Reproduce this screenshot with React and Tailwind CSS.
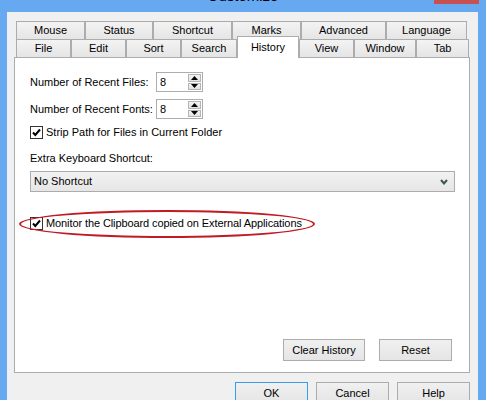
import React from "react";

const row1 = [
  { label: "Mouse", w: "w-[69px]" },
  { label: "Status", w: "w-[68px]" },
  { label: "Shortcut", w: "w-[79px]" },
  { label: "Marks", w: "w-[69px]" },
  { label: "Advanced", w: "w-[85px]" },
  { label: "Language", w: "w-[81px]" },
];

const row2 = [
  { label: "File", w: "w-[55px]" },
  { label: "Edit", w: "w-[55px]" },
  { label: "Sort", w: "w-[55px]" },
  { label: "Search", w: "w-[56px]" },
  { label: "History", w: "w-[62px]", active: true },
  { label: "View", w: "w-[55px]" },
  { label: "Window", w: "w-[62px]" },
  { label: "Tab", w: "w-[53px]" },
];

function Tab({ label, w, active }) {
  if (active) {
    return (
      <div
        className={`${w} h-[22px] -mt-[3px] -mb-[1px] relative z-10 bg-white border border-b-0 border-[#acacac] flex items-center justify-center`}
      >
        {label}
      </div>
    );
  }
  return (
    <div
      className={`${w} h-[18px] bg-linear-to-b from-[#f3f3f3] to-[#e5e5e5] border border-b-0 border-[#acacac] flex items-center justify-center`}
    >
      {label}
    </div>
  );
}

function Checkbox() {
  return (
    <div className="w-[13px] h-[13px] border border-[#333] bg-white flex items-center justify-center">
      <svg width="9" height="9" viewBox="0 0 9 9">
        <path d="M1 4.5 L3.3 7 L8 1.5" fill="none" stroke="#000" strokeWidth="2" />
      </svg>
    </div>
  );
}

function Spinner({ value }) {
  return (
    <div className="w-[47px] h-[20px] border border-[#abadb3] bg-white flex">
      <div className="flex-1 pl-[3px] flex items-center">{value}</div>
      <div className="w-[15px] flex flex-col p-[1px] gap-[1px]">
        <div className="flex-1 bg-linear-to-b from-[#f2f2f2] to-[#e3e3e3] border border-[#b5b5b5] flex items-center justify-center">
          <svg width="7" height="4" viewBox="0 0 7 4">
            <path d="M0 4 L3.5 0 L7 4 Z" fill="#000" />
          </svg>
        </div>
        <div className="flex-1 bg-linear-to-b from-[#f2f2f2] to-[#e3e3e3] border border-[#b5b5b5] flex items-center justify-center">
          <svg width="7" height="4" viewBox="0 0 7 4">
            <path d="M0 0 L7 0 L3.5 4 Z" fill="#000" />
          </svg>
        </div>
      </div>
    </div>
  );
}

function Button({ children, w, focus }) {
  return (
    <div
      className={`${w} h-[22px] flex items-center justify-center border bg-linear-to-b from-[#f0f0f0] to-[#e5e5e5] ${
        focus ? "border-[#3c9be8]" : "border-[#acacac]"
      }`}
    >
      {children}
    </div>
  );
}

export default function App() {
  return (
    <div
      className="w-[486px] h-[400px] bg-[#66a9f1] overflow-hidden relative text-[11px] text-black"
      style={{ fontFamily: '"Liberation Sans", Arial, sans-serif' }}
    >
      {/* title bar */}
      <div className="h-[12px] overflow-hidden flex justify-center">
        <div className="-mt-[12px] leading-[15px] text-[15px] text-black">Customize</div>
      </div>
      <div className="absolute top-0 left-[434px] w-[45px] h-[4px] bg-[#c75050]" />

      {/* body */}
      <div className="ml-[7px] w-[471px] h-[388px] bg-[#f0f0f0] pt-[9px] pl-[7px]">
        <div className="pl-[2px]">
          <div className="flex">
            {row1.map((t) => (
              <Tab key={t.label} {...t} />
            ))}
          </div>
          <div className="flex items-end">
            {row2.map((t) => (
              <Tab key={t.label} {...t} />
            ))}
          </div>
        </div>

        {/* panel */}
        <div className="w-[456px] h-[316px] bg-white border border-[#adadad] flex flex-col pl-[15px] pt-[14px]">
          <div className="flex items-center h-[20px]">
            <div className="w-[126px]">Number of Recent Files:</div>
            <Spinner value="8" />
          </div>
          <div className="flex items-center h-[20px] mt-[7px]">
            <div className="w-[126px]">Number of Recent Fonts:</div>
            <Spinner value="8" />
          </div>
          <div className="flex items-center h-[15px] mt-[6px] gap-[3px]">
            <Checkbox />
            <span>Strip Path for Files in Current Folder</span>
          </div>
          <div className="h-[14px] mt-[11px] flex items-center">Extra Keyboard Shortcut:</div>
          <div className="mt-[6px] w-[425px] h-[21px] border border-[#acacac] bg-linear-to-b from-[#f2f2f2] to-[#e6e6e6] flex items-center justify-between pl-[3px] pr-[6px]">
            <span>No Shortcut</span>
            <svg width="8" height="6" viewBox="0 0 8 6">
              <path d="M1 1 L4 4.5 L7 1" fill="none" stroke="#3d5555" strokeWidth="2" />
            </svg>
          </div>
          <div className="relative flex items-center h-[15px] mt-[24px] gap-[3px]">
            <Checkbox />
            <span className="tracking-[-0.1px]">Monitor the Clipboard copied on External Applications</span>
            <div className="absolute -left-[11px] -top-[6px] w-[296px] h-[28px] rounded-[50%] border-2 border-[#c01a24]" />
          </div>

          <div className="mt-auto mb-[11px] pr-[17px] flex justify-end gap-[14px]">
            <Button w="w-[82px]">Clear History</Button>
            <Button w="w-[73px]">Reset</Button>
          </div>
        </div>

        {/* dialog buttons */}
        <div className="mt-[9px] w-[456px] flex justify-end gap-[8px]">
          <Button w="w-[73px]" focus>
            OK
          </Button>
          <Button w="w-[73px]">Cancel</Button>
          <Button w="w-[73px]">Help</Button>
        </div>
      </div>
    </div>
  );
}
